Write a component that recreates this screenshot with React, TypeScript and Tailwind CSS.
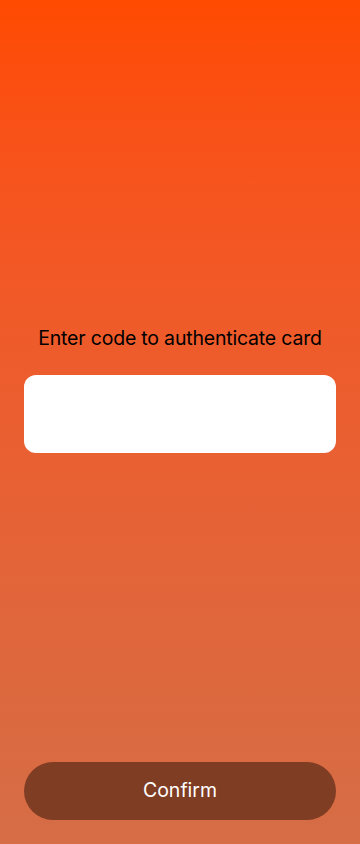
export default function App() {
  return (
    <div
      className="flex h-[844px] w-full flex-col bg-gradient-to-b from-[#ff4a00] to-[#d56d46] px-6"
      style={{ fontFamily: 'Inter, "Liberation Sans", sans-serif' }}
    >
      <div className="pt-[326px]">
        <p className="text-center text-[19.5px] leading-6 tracking-[-0.01em] text-black">
          Enter code to authenticate card
        </p>
        <input
          type="text"
          aria-label="Authentication code"
          className="mt-[25px] block h-[78px] w-full rounded-xl bg-white px-4 text-lg outline-none"
        />
      </div>
      <div className="flex-1" />
      <button className="mb-6 h-[58px] w-full rounded-full bg-[#7f3d24] text-[19.5px] text-white">
        Confirm
      </button>
    </div>
  )
}
